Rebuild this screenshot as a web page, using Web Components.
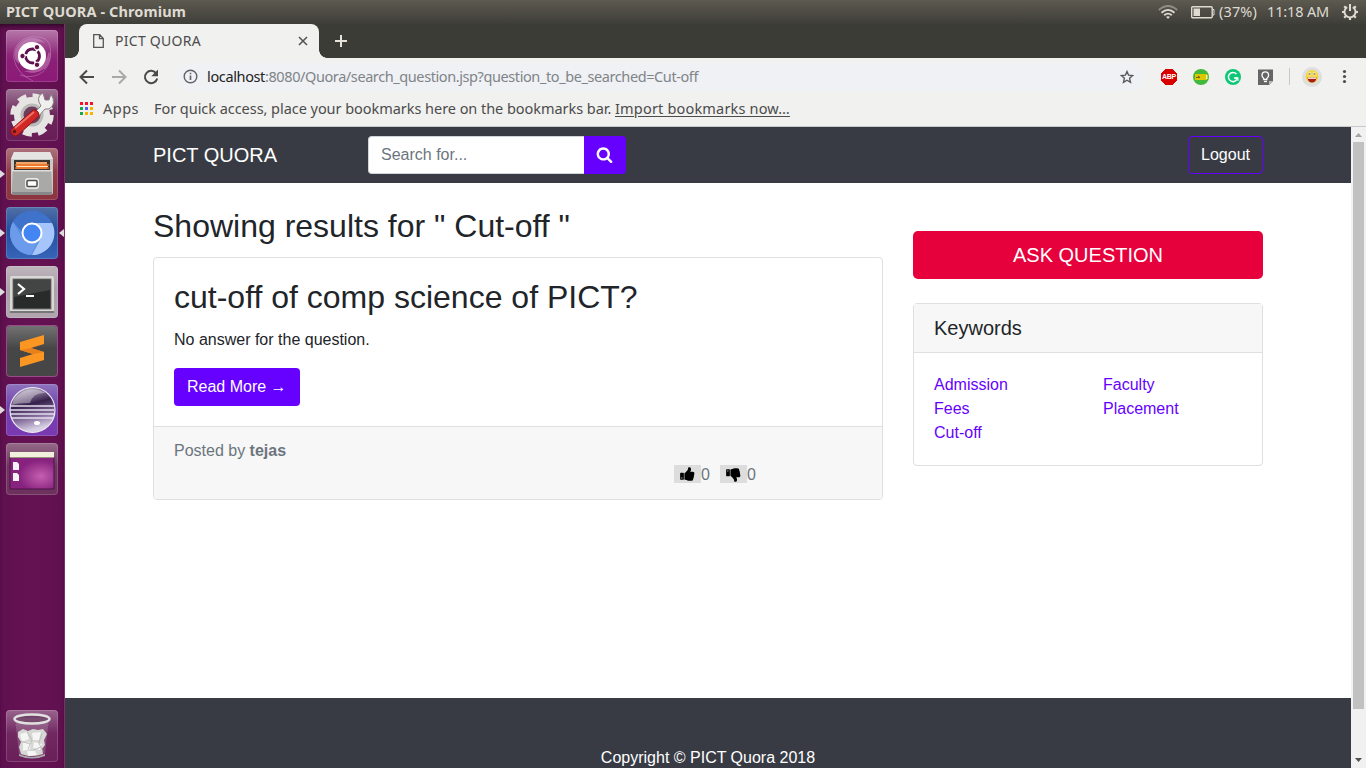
<!DOCTYPE html>
<html lang="en">
<head>
<meta charset="utf-8">
<title>PICT QUORA</title>
<style>
html,body{margin:0;height:100%;overflow:hidden}
body{font-family:"Liberation Sans",Arial,sans-serif}
</style>
</head>
<body>
<desk-top></desk-top>
<script>
function define(name, html, setup) {
  customElements.define(name, class extends HTMLElement {
    constructor() {
      super();
      this.attachShadow({mode: 'open'}).innerHTML = html;
    }
    connectedCallback() { if (setup) setup.call(this, this.shadowRoot); }
  });
}

// Spreads its text over a given width by adjusting the tracking.
define('fit-text', `<style>:host{display:block;white-space:pre;flex:none;line-height:1.3}span{display:inline-block}:host([link]) span{text-decoration:underline;text-underline-offset:2px}</style><span><slot></slot></span>`, function (root) {
  const s = root.querySelector('span'), w = +this.getAttribute('w');
  const n = this.textContent.length, now = s.getBoundingClientRect().width;
  if (now) s.style.letterSpacing = ((w - now) / n) + 'px';
  this.style.width = w + 'px';
});

define('system-bar', `<style>
:host{display:flex;align-items:center;height:24px;box-sizing:border-box;padding:0 7px 0 6px;background:linear-gradient(#5d5a50,#504e46 40%,#3e3e39);color:#dfdbd2;font:14.5px "Noto Sans",sans-serif}
b{flex:1;font-weight:700;margin-top:-1px}
svg{flex:none;display:block}
fit-text{position:relative}
</style>
<b><fit-text w="180">PICT QUORA - Chromium</fit-text></b>
<svg width="20" height="14" viewBox="0 0 20 14" fill="none" stroke-width="1.8"><path d="M.8 5Q10-3 19.2 5" stroke="#918e84"/><path d="M3.5 7.7Q10 2 16.5 7.7M6.2 10.3Q10 7 13.8 10.3" stroke="#dfdbd2"/><path d="M8 11.8Q10 10.5 12 11.8L10 14z" fill="#dfdbd2"/></svg>
<svg style="margin:0 4px 0 12px" width="25" height="13" viewBox="0 0 25 13"><rect x="1.700" y=".700" width="20.500" height="11" rx="1" fill="none" stroke="#dfdbd2" stroke-width="1.4"/><path d="M3.500 2.500h6.500v7.500H3.500z" fill="#dfdbd2"/><path d="M22.500 3.500h1.500v5.500h-1.500" fill="none" stroke="#dfdbd2"/></svg>
<fit-text w="38" style="margin-top:-1px">(37%)</fit-text>
<fit-text w="62" style="margin:-1px 12px 0 10px">11:18 AM</fit-text>
<svg width="18" height="18" viewBox="0 0 18 18" fill="none" stroke="#dfdbd2"><path d="M6.200 4.100A5.500 5.500 0 1 0 11.800 4.100" stroke-width="1.900"/><path d="M9 1v7" stroke-width="2"/><path d="M1 9h2.500M14.500 9H17M3.200 3.200l2 2M14.800 3.200l-2 2M3.200 14.800l2-2M14.800 14.800l-2-2M9 17v-2.500" stroke-width="2.200"/></svg>`);

define('launcher-tile', `<style>
:host{display:block;position:relative;width:52px;height:52px;flex:none;border-radius:4px;background:linear-gradient(#ffffff40,#fff0 45%),var(--tile,#7b3068)}
:host::after{content:"";position:absolute;inset:0;border-radius:4px;box-shadow:inset 0 0 0 1px #ffffff28}
i,u{display:none;position:absolute;top:22px;border:4px solid transparent}
i{left:-6px;border-left:5px solid #ddd;border-right:0}
u{right:-6px;border-right:5px solid #ddd;border-left:0}
:host([running]) i,:host([active]) u{display:block}
</style><slot></slot><i></i><u></u>`);

define('app-launcher', `<style>
:host{display:flex;flex-direction:column;gap:7px;box-sizing:border-box;width:65px;padding:6px 6px;background:linear-gradient(90deg,#5f104f,#651253 50%,#61104f);border-right:1px solid #812f6c;box-shadow:inset 0 4px 5px -2px #2c0625}
svg{display:block;width:52px;height:52px}
.end{margin-top:auto}
</style>
<launcher-tile style="--tile:linear-gradient(#9d4a8c,#8b1f77 60%,#8c1a78)"><svg viewBox="0 0 52 52">
<g fill="none" stroke="#d9a6d0" stroke-opacity=".4" stroke-width="1"><path d="M8 29C6 12 23 2 39 9C48 15 45 33 38 39"/><path d="M14 45C31 51 46 39 44 23"/><path d="M8 29Q11 44 27 51"/></g>
<path d="M9 22C12 9 29 3 39 13Q27 9 17 19Q12 26 13 34Q7 29 9 22M43 21C46 37 33 47 18 41Q31 41 38 32Q42 27 43 21" fill="#d8a1cd" opacity=".45"/>
<circle cx="26" cy="26" r="14" fill="#fff"/><circle cx="26.500" cy="26" r="7" fill="none" stroke="#5f104f" stroke-width="2.800" stroke-dasharray="12.700 2" stroke-dashoffset="5.600"/><g fill="#5f104f" stroke="#fff"><circle cx="16.500" cy="26" r="2.700"/><circle cx="31" cy="17.200" r="2.700"/><circle cx="31" cy="34.800" r="2.700"/></g></svg></launcher-tile>
<launcher-tile style="--tile:linear-gradient(#7d4671,#6a2359 60%,#6a1d58)"><svg viewBox="0 0 52 52">
<circle cx="26" cy="26" r="18" fill="#e6e5e3"/><circle cx="26" cy="26" r="19.500" fill="none" stroke="#e6e5e3" stroke-width="4.500" stroke-dasharray="9 6.315"/><circle cx="26" cy="26" r="10" fill="#6d3d60" stroke="#bcbab7" stroke-width="3"/>
<path d="M27 25L35 17Q29 8 37 4l2 7 4 0 2-6Q51 15 43 20L39 20 31 29z" fill="#f0f0ee" stroke="#85817f"/><path d="M7 39L27 21q3-1 5 2t0 5L13 45q-4 4-7 0t1-6" fill="#cf2826" stroke="#8e1514"/><path d="M9 39L28 23" stroke="#ee7066" stroke-width="2"/><circle cx="8.500" cy="42.500" r="1.700" fill="#5d1611"/></svg></launcher-tile>
<launcher-tile running style="--tile:linear-gradient(#914450,#8c3440)"><svg viewBox="0 0 52 52">
<path d="M8 4h36l3 7v35H5V11z" fill="#c9c9c7"/><path d="M8 4h36l3 7H5z" fill="#e4e4e2"/><path d="M8 12h36v10H8z" fill="#373432"/><path d="M10 14h31v7H10z" fill="#f3a46b"/><path d="M9 17h34M9 20h34" stroke="#e86e19" stroke-width="1.500"/><path d="M11 18.500h31" stroke="#ffe7ca"/><path d="M7 22h38l1.500 24h-41z" fill="#a9a9a7"/><path d="M6 22h40v1.500H6z" fill="#ddd"/><path d="M6 44h40v3H6z" fill="#888"/><rect x="19" y="30" width="14" height="11" rx="3" fill="#e9e9e7"/><rect x="21" y="32.500" width="10" height="6" rx="1" fill="#fff" stroke="#4b4b4b" stroke-width="1.500"/></svg></launcher-tile>
<launcher-tile running active style="--tile:linear-gradient(#17408b,#3764b8)"><svg viewBox="0 0 52 52">
<circle cx="26" cy="26" r="22" fill="#5a8ddf"/><path d="M26 16h20A22 22 0 0 1 26 48L35 31z" fill="#a6c6fb"/><path d="M7 15A22 22 0 0 1 46 16H26l-9 10z" fill="#3f72ca"/><path d="M7 15L17 32 26 36 31 36 25 48A22 22 0 0 1 7 15" fill="#6b9bea"/><circle cx="26" cy="26" r="9.500" fill="#4385f3" stroke="#fff" stroke-width="2"/></svg></launcher-tile>
<launcher-tile running style="--tile:linear-gradient(#a89ca6,#b1a5af)"><svg viewBox="0 0 52 52">
<rect x="4" y="10" width="44" height="37" rx="2" fill="#d8d8d6"/><path d="M4 45h44v2H4z" fill="#777"/><rect x="7" y="13" width="38" height="30" fill="#292b2a" stroke="#777"/><path d="M8 14h36v10L8 31z" fill="#434544"/><path d="M12 18l6 5-6 5" fill="none" stroke="#fff" stroke-width="2.200"/><path d="M20 30h8" stroke="#fff" stroke-width="2"/></svg></launcher-tile>
<launcher-tile style="--tile:#464646"><svg viewBox="0 0 52 52"><path d="M14 17L38 10v9l-13 4 13 4v8L14 42v-9l13-4-13-4z" fill="#fb9622"/><path d="M14 25l11-2 13 4-11 2z" fill="#e8801a"/><rect x=".500" y=".500" width="51" height="51" rx="4" fill="none" stroke="#852a70"/></svg></launcher-tile>
<launcher-tile running style="--tile:linear-gradient(#6a45a8,#7a39b1)"><svg viewBox="0 0 52 52"><defs><linearGradient id="a" x2=".25" y2="1"><stop stop-color="#d7d1e2"/><stop offset=".23" stop-color="#897999"/><stop offset=".45" stop-color="#36204c"/><stop offset=".75" stop-color="#88719e"/><stop offset="1" stop-color="#d7d0e3"/></linearGradient></defs><circle cx="26.500" cy="26" r="22.500" fill="url(#a)" stroke="#ece8f4" stroke-width="1.200"/><path d="M8 15Q22-1 40 9Q27 8 24 19Q10 19 6 21z" fill="#fff" opacity=".35"/><path d="M5 22h43M4 26h44M4 30h44M5 34h43" stroke="#e4def0" stroke-width="1.300"/><ellipse cx="31" cy="39" rx="3" ry="2" fill="#fff"/></svg></launcher-tile>
<launcher-tile style="--tile:linear-gradient(#703860,#6e315e)"><svg viewBox="0 0 52 52"><defs><radialGradient id="b" cx=".7" cy=".6"><stop stop-color="#c45fb1"/><stop offset="1" stop-color="#87237e"/></radialGradient></defs><path d="M4 14h44v32H4z" fill="url(#b)" stroke="#4c1247"/><path d="M4 9h44v6H4z" fill="#f1f0dc"/><path d="M4 14.500h44" stroke="#9a927c"/><path d="M7 19h4l2 2v6H7zM7 30h4l2 2v6H7z" fill="#f6f2f5"/></svg></launcher-tile>
<launcher-tile class="end" style="--tile:linear-gradient(#763067,#6b1f5a)"><svg viewBox="0 0 52 52"><path d="M9 8l4 36q13 6 26 0l4-36z" fill="#ddd" opacity=".2"/><path d="M12 22l5-3 5 2 5-2 5 1 5-1 4 5-3 6 1 5-3 4 1 5q-12 4-22 0l-2-7 2-5-3-5z" fill="#d7d7d5"/><path d="M14 24l7-2 2 7-7 3zM26 23l9-1-2 8-6 0zM17 33l8-1-1 7-7 2zM28 32l8 2-2 6-7-2zM21 41l8 0 2 4-9 1z" fill="#f5f5f3"/><path d="M21 22l5 8-4 9M36 23l-3 10 4 9M15 31l9 3M27 40l8-3" fill="none" stroke="#b5b5b5" stroke-width=".8"/><path d="M13 44q13 6 26 0v2q-13 5-26 0z" fill="#aaa"/><ellipse cx="26" cy="9" rx="17.500" ry="4.500" fill="#55304f" fill-opacity=".5" stroke="#e1e1df" stroke-width="2.500"/></svg></launcher-tile>`);

define('browser-tabs', `<style>
:host{display:flex;height:34px;background:#3c3c37;padding-left:14px;font:14px "Noto Sans",sans-serif}
.tab{position:relative;display:flex;align-items:center;width:240px;box-sizing:border-box;padding:0 11px 0 14px;border-radius:8px 8px 0 0;background:#f1f1ef;color:#4c4c4c}
.tab::before,.tab::after{content:"";position:absolute;bottom:0;width:8px;height:8px}
.tab::before{left:-8px;background:radial-gradient(circle at 0 0,#0000 7.5px,#f1f1ef 8px)}
.tab::after{right:-8px;background:radial-gradient(circle at 100% 0,#0000 7.5px,#f1f1ef 8px)}
fit-text{margin:0 auto 0 11px}
.plus{align-self:center;margin-left:16px}
</style>
<div class="tab"><svg width="11" height="14" viewBox="0 0 11 14" fill="none" stroke="#565656" stroke-width="1.300"><path d="M.7.700h6L10.300 4.500v8.800H.700zM6.500.700v4h4"/></svg><fit-text w="86">PICT QUORA</fit-text><svg width="10" height="10" viewBox="0 0 10 10" stroke="#555" stroke-width="1.600"><path d="M1 1l8 8M9 1L1 9"/></svg></div>
<svg class="plus" width="12" height="12" viewBox="0 0 12 12" stroke="#e6e3da" stroke-width="2"><path d="M6 0v12M0 6h12"/></svg>`);

define('browser-toolbar', `<style>
:host{display:flex;align-items:center;box-sizing:border-box;height:36px;background:#f1f1ef;padding:1px 15px 0 13px;font:14.5px "Noto Sans",sans-serif}
svg{display:block;flex:none}
.url{display:flex;align-items:center;box-sizing:border-box;width:970px;height:28px;border-radius:14px;margin-left:15px;padding:0 11px 0 8px;background:#eff1f4;color:#808488}
.url fit-text:first-of-type{color:#222;margin-left:9px}
.star{margin-left:auto}
.ext{display:flex;align-items:center;margin-left:16px;gap:16px}
.abp{display:grid;place-items:center;width:16px;height:16px;background:linear-gradient(135deg,#0000 3.500px,#d90000 3.500px) 0 0/8px 8px no-repeat,linear-gradient(225deg,#0000 3.500px,#d90000 3.500px) 100% 0/8px 8px no-repeat,linear-gradient(45deg,#0000 3.500px,#d90000 3.500px) 0 100%/8px 8px no-repeat,linear-gradient(315deg,#0000 3.500px,#d90000 3.500px) 100% 100%/8px 8px no-repeat;color:#fff;font:700 7px/10px "Liberation Sans",sans-serif;letter-spacing:-.2px}
.bar{width:1px;height:17px;background:#c8c8c8;margin:0 12px 0 16px}
.dots{margin-left:18px}
</style>
<svg width="18" height="18" viewBox="0 0 18 18" fill="none" stroke="#4a4a4a" stroke-width="2"><path d="M16 9H3M9 2.500L2.500 9l6.500 6.500"/></svg>
<svg style="margin:0 14px" width="18" height="18" viewBox="0 0 18 18" fill="none" stroke="#a9a9a9" stroke-width="2"><path d="M2 9h13M9 2.500L15.500 9 9 15.500"/></svg>
<svg width="18" height="18" viewBox="0 0 18 18"><path d="M14.300 5.500A6.200 6.200 0 1 0 15.200 10.500" fill="none" stroke="#4a4a4a" stroke-width="2"/><path d="M16 1.500v6.700H9.300z" fill="#4a4a4a"/></svg>
<div class="url"><svg width="15" height="15" viewBox="0 0 15 15"><circle cx="7.500" cy="7.500" r="6.300" fill="none" stroke="#5f6368" stroke-width="1.400"/><path d="M6.700 6.500h1.600V11H6.700zM6.700 3.700h1.600v1.600H6.700z" fill="#5f6368"/></svg><fit-text w="58">localhost</fit-text><fit-text w="433">:8080/Quora/search_question.jsp?question_to_be_searched=Cut-off</fit-text>
<svg class="star" width="14" height="14" viewBox="0 0 14 14"><path d="M7 1.500l1.600 3.700 4 .400-3 2.700.900 4L7 10.200l-3.500 2.100.900-4-3-2.700 4-.400z" fill="none" stroke="#55595e" stroke-width="1.400"/></svg></div>
<div class="ext">
<span class="abp">ABP</span>
<svg width="16" height="16" viewBox="0 0 16 16"><circle cx="8" cy="8" r="8" fill="#42b93c"/><path d="M2 5h12v6H2z" fill="#dcc600"/><path d="M3 8.500h4M5 7l2 1.500" stroke="#75600c"/><path d="M13 6h1.500v4H13z" fill="#fff6a0"/></svg>
<svg width="16" height="16" viewBox="0 0 16 16"><circle cx="8" cy="8" r="8" fill="#0cc776"/><path d="M11.500 5A4.600 4.600 0 1 0 12.500 9H9" fill="none" stroke="#fff" stroke-width="1.500"/><path d="M10 9h3v3" fill="none" stroke="#fff"/></svg>
<svg width="16" height="16" viewBox="0 0 16 16"><path d="M1 .500h15v11.500l-4 4H1z" fill="#666"/><path d="M12 16v-4h4z" fill="#bbb"/><path d="M6.800 9.500Q5 8 5 6.200a3.300 3.300 0 0 1 6.600 0Q11.600 8 9.800 9.500v1h-3z" fill="none" stroke="#fff" stroke-width="1.300"/><path d="M7 12.500h3" stroke="#fff" stroke-width="1.300"/></svg>
</div><span class="bar"></span>
<svg width="20" height="20" viewBox="0 0 20 20"><circle cx="10" cy="10" r="10" fill="#dedede"/><circle cx="10" cy="9.500" r="6.500" fill="#f4d83b"/><path d="M5.500 10.500h9q-.500 5-4.500 5t-4.500-5" fill="#a91c1b"/><path d="M6 10.500h8v1.300H6z" fill="#fff"/><circle cx="7.500" cy="7" r="1.800" fill="#fff9cf"/><circle cx="12.500" cy="7" r="1.800" fill="#fff9cf"/><path d="M6.500 7h2M11.500 7h2" stroke="#4a3b10"/></svg>
<svg class="dots" width="10" height="16" viewBox="0 0 10 16" fill="#4d4d4d"><circle cx="4.500" cy="2.500" r="1.600"/><circle cx="4.500" cy="7.500" r="1.600"/><circle cx="4.500" cy="12.500" r="1.600"/></svg>`);

define('bookmarks-bar', `<style>
:host{display:flex;align-items:center;box-sizing:border-box;height:33px;padding:0 15px 4px;background:#f1f1ef;border-bottom:1px solid #c8cac9;color:#4c4c4c;font:14.5px "Noto Sans",sans-serif}
.grid{display:grid;grid-template-columns:repeat(3,3px);gap:2px}
.grid i{height:3px}
</style><span class="grid"></span><fit-text w="36" style="margin:0 15px 0 10px">Apps</fit-text><fit-text w="461">For quick access, place your bookmarks here on the bookmarks bar. </fit-text><fit-text link w="175">Import bookmarks now…</fit-text>`, function (root) {
  const colors = ['#f5112a', '#f5112a', '#f5112a', '#15a853', '#5a5cf0', '#f4b400', '#15a853', '#f4b400', '#f4b400'];
  root.querySelector('.grid').innerHTML = colors.map(c => `<i style="background:${c}"></i>`).join('');
});

define('site-nav', `<style>
:host{display:block;background:#383b44}
.in{display:flex;align-items:center;width:1110px;height:56px;margin:0 auto;color:#fff}
.brand{font-size:20px;width:215px}
.field{box-sizing:border-box;width:216px;height:38px;border:1px solid #ced4da;border-right:0;border-radius:4px 0 0 4px;background:#fff;color:#6c757d;padding:6px 12px;line-height:24px}
.go{display:grid;place-items:center;box-sizing:border-box;padding:0 1px 2px 0;width:42px;height:38px;border-radius:0 4px 4px 0;background:#60f}
.out{box-sizing:border-box;height:38px;margin-left:auto;border:1px solid #60f;border-radius:4px;padding:6px 12px;line-height:24px}
</style><div class="in"><span class="brand">PICT QUORA</span><span class="field">Search for...</span><span class="go"><svg width="17" height="17" viewBox="0 0 1792 1792" fill="#fff"><path d="M1216 832q0-185-131.500-316.500t-316.500-131.500-316.500 131.500-131.500 316.500 131.500 316.500 316.500 131.500 316.500-131.500 131.500-316.500zm512 832q0 52-38 90t-90 38q-54 0-90-38l-343-342q-179 124-399 124-143 0-273.500-55.500t-225-150-150-225-55.500-273.500 55.500-273.500 150-225 225-150 273.500-55.500 273.500 55.500 225 150 150 225 55.500 273.500q0 220-124 399l343 343q37 37 37 90z"/></svg></span><span class="out">Logout</span></div>`);

define('vote-button', `<style>
:host{display:flex;align-items:center;height:24px}
span{display:grid;place-items:center;width:27px;height:18px;margin-bottom:2px;background:#ddd}
svg{display:block;transform:translateX(-1px)}
:host([down]) svg{transform:translateY(1px) scaleY(-1)}
</style><span><svg width="16" height="16" viewBox="0 0 1792 1792"><path d="M384 1344q0-26-19-45t-45-19-45 19-19 45 19 45 45 19 45-19 19-45zm160-512v640q0 26-19 45t-45 19h-288q-26 0-45-19t-19-45v-640q0-26 19-45t45-19h288q26 0 45 19t19 45zm1184 0q0 86-55 149 15 44 15 76 3 76-43 137 17 56 0 117-15 57-54 94 9 112-49 181-64 76-197 78h-129q-66 0-144-15.500t-121.500-29-120.500-39.500q-123-43-158-44-26-1-45-19.500t-19-44.500v-641q0-25 18-43.500t43-20.500q24-2 76-59t101-121q68-87 101-120 18-18 31-48t17.500-48.500 13.500-60.500q7-39 12.500-61t19.500-52 34-50q19-19 45-19 46 0 82.500 10.500t60 26 40 40.500 24 45 12 50 5 45 .5 39q0 38-9.500 76t-19 60-27.500 56q-3 6-10 18t-11 22-8 24h277q78 0 135 57t57 135z"/></svg></span><slot></slot>`);

define('question-card', `<style>
:host{display:block;border:1px solid #dfdfdf;border-radius:4px;background:#fff}
.body{padding:20px}
h2{margin:0 0 11.2px;font-size:32px;font-weight:400;line-height:38.4px}
p{margin:0 0 16px}
.more{display:inline-block;box-sizing:border-box;height:38px;padding:7px 13px;border-radius:4px;background:#60f;color:#fff;vertical-align:top}
.foot{padding:12px 20px;border-top:1px solid #dfdfdf;background:#f7f7f7;color:#6c757d;border-radius:0 0 3px 3px}
.votes{display:flex;gap:10px;padding-left:500px}
</style><div class="body"><h2><slot name="title"></slot></h2><p><slot></slot></p><span class="more">Read More →</span></div><div class="foot">Posted by <b><slot name="author"></slot></b><div class="votes"><vote-button>0</vote-button><vote-button down>0</vote-button></div></div>`);

define('keyword-card', `<style>
:host{display:block;border:1px solid #dfdfdf;border-radius:4px}
h5{margin:0;padding:12px 20px;font-size:20px;font-weight:400;line-height:24px;background:#f7f7f7;border-bottom:1px solid #dfdfdf}
.cols{display:grid;grid-template-columns:169px 1fr;padding:20px;color:#60f}
.cols div{display:flex;flex-direction:column}
</style><h5>Keywords</h5><div class="cols"><div><span>Admission</span><span>Fees</span><span>Cut-off</span></div><div><span>Faculty</span><span>Placement</span></div></div>`);

define('page-scrollbar', `<style>
:host{display:flex;flex-direction:column;align-items:center;width:15px;background:#f1f1f1}
.t{width:11px;height:567px;background:#c1c1c1}
svg{display:block;height:15px;width:15px}
svg:last-child{margin-top:auto}
</style><svg viewBox="0 0 15 15"><path d="M4 10l3.500-4 3.500 4z" fill="#a3a3a3"/></svg><div class="t"></div><svg viewBox="0 0 15 15"><path d="M4 5l3.500 4L11 5z" fill="#505050"/></svg>`);

define('quora-page', `<style>
:host{display:flex;flex-direction:column;overflow:hidden;background:#fff;color:#212529;font-size:16px;line-height:24px}
main{flex:none;display:grid;grid-template-columns:730px 350px;gap:30px;width:1110px;height:515px;margin:0 auto;align-items:start}
h1{margin:24px 0 12px;font-size:32px;font-weight:400;line-height:38.4px}
aside{padding-top:48px}
.ask{height:48px;line-height:48px;text-align:center;font-size:20px;border-radius:5px;background:#e6003c;color:#fff;margin-bottom:24px}
footer{flex:none;padding:48px 0;text-align:center;background:#383b44;color:#fff}
</style><site-nav></site-nav><main><section><h1>Showing results for " Cut-off "</h1><question-card><span slot="title">cut-off of comp science of PICT?</span>No answer for the question.<span slot="author">tejas</span></question-card></section><aside><div class="ask">ASK QUESTION</div><keyword-card></keyword-card></aside></main><footer>Copyright © PICT Quora 2018</footer>`);

define('desk-top', `<style>
:host{display:grid;grid-template:24px 744px / 65px 1301px;width:1366px;height:768px;overflow:hidden}
system-bar{grid-column:1/3}
.win{display:flex;flex-direction:column;min-width:0}
.view{display:grid;grid-template-columns:1286px 15px;height:641px}
</style><system-bar></system-bar><app-launcher></app-launcher><div class="win"><browser-tabs></browser-tabs><browser-toolbar></browser-toolbar><bookmarks-bar></bookmarks-bar><div class="view"><quora-page></quora-page><page-scrollbar></page-scrollbar></div></div>`);
</script>
</body>
</html>
